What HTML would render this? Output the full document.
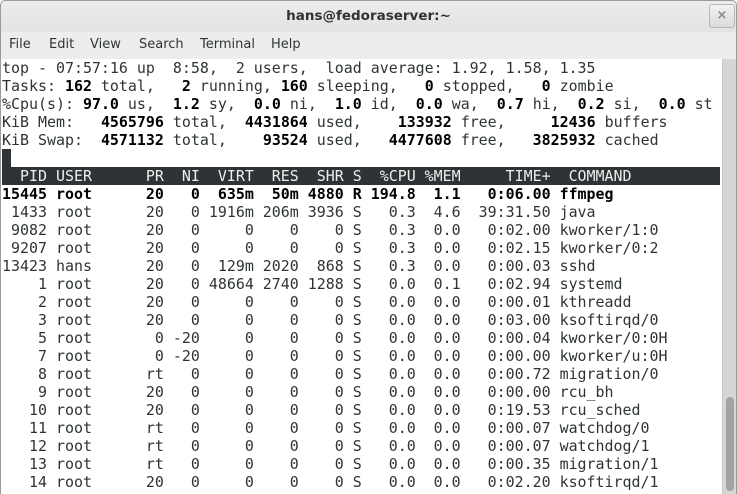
<!DOCTYPE html>
<html><head><meta charset="utf-8"><style>
*{margin:0;padding:0;box-sizing:border-box}
body{width:737px;height:494px;overflow:hidden;background:#fff;position:relative;font-family:"DejaVu Sans","Liberation Sans",sans-serif}
#title{position:absolute;left:0;top:0;width:737px;height:32px;background:linear-gradient(#ececec,#e3e3e3);border:1px solid #9a9a9a;border-bottom:none;border-radius:5px 5px 0 0}
#title .t{position:absolute;left:0;right:0;top:7px;text-align:center;font-weight:bold;font-size:13.5px;color:#2e3436}
#close{position:absolute;left:708px;top:3px;width:26px;height:24px;border:1px solid #b8b8b8;border-radius:3px;background:linear-gradient(#f2f2f2,#dadada);color:#8a8a8a;font-size:13px;text-align:center;line-height:22px;font-weight:bold}
#menu{position:absolute;left:0;top:32px;width:737px;height:27px;background:#ededed;border-left:1px solid #9a9a9a;border-right:1px solid #9a9a9a}
#menu span{position:absolute;top:5px;font-size:13px;color:#2e3436}
#term{position:absolute;left:2px;top:59px;width:720px;height:435px;overflow:hidden;font-family:"DejaVu Sans Mono","Liberation Mono",monospace;font-size:14.95px;line-height:18px;color:#2e3436;white-space:pre}
#term b{color:#000}
#term div{height:18px}
.hdr{background:#2e3436;color:#eeeeec;width:720px;margin-left:-2px;padding-left:2px}
#cur{position:absolute;left:2px;top:149px;width:9px;height:18px;background:#2e3436}
#sb{position:absolute;left:722px;top:59px;width:15px;height:435px;background:#d6d6d6;border-left:1px solid #c8c8c8;border-right:1px solid #9a9a9a}
#thumb{position:absolute;left:3px;top:338px;width:8px;height:94px;background:#a3a3a3;border-radius:4px}
#lb{position:absolute;left:0;top:32px;width:1px;height:462px;background:#9a9a9a}
</style></head><body>
<div id="title"><div class="t">hans@fedoraserver:~</div><div id="close">×</div></div>
<div id="menu"><span style="left:8px">File</span><span style="left:48px">Edit</span><span style="left:89px">View</span><span style="left:138px">Search</span><span style="left:199px">Terminal</span><span style="left:270px">Help</span></div>
<div id="term"><div>top - 07:57:16 up  8:58,  2 users,  load average: 1.92, 1.58, 1.35</div><div>Tasks: <b>162</b> total,   <b>2</b> running, <b>160</b> sleeping,   <b>0</b> stopped,   <b>0</b> zombie</div><div>%Cpu(s): <b>97.0</b> us,  <b>1.2</b> sy,  <b>0.0</b> ni,  <b>1.0</b> id,  <b>0.0</b> wa,  <b>0.7</b> hi,  <b>0.2</b> si,  <b>0.0</b> st</div><div>KiB Mem:   <b>4565796</b> total,  <b>4431864</b> used,    <b>133932</b> free,     <b>12436</b> buffers</div><div>KiB Swap:  <b>4571132</b> total,    <b>93524</b> used,   <b>4477608</b> free,   <b>3825932</b> cached</div><div> </div><div class="hdr">  PID USER      PR  NI  VIRT  RES  SHR S  %CPU %MEM     TIME+  COMMAND</div><div><b>15445 root      20   0  635m  50m 4880 R 194.8  1.1   0:06.00 ffmpeg</b></div><div> 1433 root      20   0 1916m 206m 3936 S   0.3  4.6  39:31.50 java</div><div> 9082 root      20   0     0    0    0 S   0.3  0.0   0:02.00 kworker/1:0</div><div> 9207 root      20   0     0    0    0 S   0.3  0.0   0:02.15 kworker/0:2</div><div>13423 hans      20   0  129m 2020  868 S   0.3  0.0   0:00.03 sshd</div><div>    1 root      20   0 48664 2740 1288 S   0.0  0.1   0:02.94 systemd</div><div>    2 root      20   0     0    0    0 S   0.0  0.0   0:00.01 kthreadd</div><div>    3 root      20   0     0    0    0 S   0.0  0.0   0:03.00 ksoftirqd/0</div><div>    5 root       0 -20     0    0    0 S   0.0  0.0   0:00.04 kworker/0:0H</div><div>    7 root       0 -20     0    0    0 S   0.0  0.0   0:00.00 kworker/u:0H</div><div>    8 root      rt   0     0    0    0 S   0.0  0.0   0:00.72 migration/0</div><div>    9 root      20   0     0    0    0 S   0.0  0.0   0:00.00 rcu_bh</div><div>   10 root      20   0     0    0    0 S   0.0  0.0   0:19.53 rcu_sched</div><div>   11 root      rt   0     0    0    0 S   0.0  0.0   0:00.07 watchdog/0</div><div>   12 root      rt   0     0    0    0 S   0.0  0.0   0:00.07 watchdog/1</div><div>   13 root      rt   0     0    0    0 S   0.0  0.0   0:00.35 migration/1</div><div>   14 root      20   0     0    0    0 S   0.0  0.0   0:02.20 ksoftirqd/1</div></div>
<div id="cur"></div>
<div id="lb"></div>
<div id="sb"><div id="thumb"></div></div>
</body></html>
